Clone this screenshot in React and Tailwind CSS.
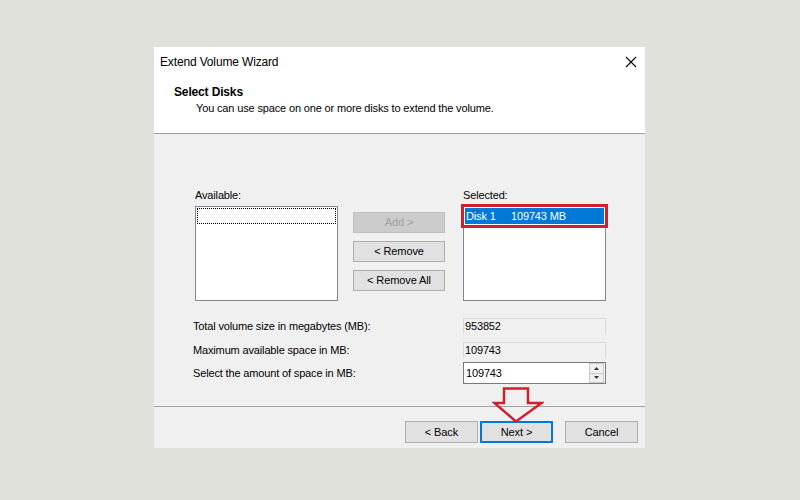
import React from 'react';

const font = { fontFamily: '"Liberation Sans", Arial, sans-serif' };

function Btn({ children, disabled, primary, className = '' }) {
  return (
    <div
      className={`flex items-center justify-center text-[11px] tracking-[-0.1px] border ${
        disabled
          ? 'bg-[#cccccc] border-[#bfbfbf] text-[#a0a0a0]'
          : primary
          ? 'bg-[#e1e1e1] border-[#0078d7] border-2 text-black'
          : 'bg-[#e1e1e1] border-[#adadad] text-black'
      } ${className}`}
    >
      {children}
    </div>
  );
}

function Field({ value }) {
  return (
    <div className="w-[143px] h-[16px] bg-[#f0f0f0] border border-[#d9d9d9] border-b-0 text-[11px] leading-[15px] pl-[1px] text-black">
      {value}
    </div>
  );
}

export default function App() {
  return (
    <div className="w-[800px] h-[500px] bg-[#dfe1da] pt-[47px] pl-[154px] relative tracking-[-0.15px]" style={font}>
      <div className="w-[491px] h-[401px] bg-[#f0f0f0] flex flex-col">
        {/* header */}
        <div className="h-[87px] bg-white flex flex-col border-b border-[#a0a0a0]">
          <div className="flex items-center justify-between pl-[6px] pr-[6px] pt-[8px] h-[22px]">
            <span className="text-[12px] text-black">Extend Volume Wizard</span>
            <svg width="12" height="12" viewBox="0 0 12 12" className="mr-[2px]">
              <path d="M1 1L11 11M11 1L1 11" stroke="#000" strokeWidth="1.1" />
            </svg>
          </div>
          <div className="pl-[20px] pt-[16px] text-[12px] font-bold text-black leading-[15px]">Select Disks</div>
          <div className="pl-[42px] pt-[1px] text-[11px] text-black leading-[15px]">
            You can use space on one or more disks to extend the volume.
          </div>
        </div>

        {/* body */}
        <div className="flex-1 flex flex-col pl-[39px]">
          <div className="flex mt-[54px]">
            <div className="flex flex-col w-[143px] ml-[2px]">
              <span className="text-[11px] leading-[14px] text-black">Available:</span>
              <div className="mt-[4px] h-[95px] bg-white border border-[#828790] p-[1px]">
                <div className="h-[16px] border border-dotted border-black" />
              </div>
            </div>
            <div className="flex flex-col gap-[8px] ml-[15px] mt-[24px] w-[92px]">
              <Btn disabled className="h-[21px]">Add &gt;</Btn>
              <Btn className="h-[21px]">&lt; Remove</Btn>
              <Btn className="h-[21px]">&lt; Remove All</Btn>
            </div>
            <div className="flex flex-col w-[143px] ml-[18px]">
              <span className="text-[11px] leading-[14px] text-black">Selected:</span>
              <div className="mt-[4px] h-[95px] bg-white border border-[#828790] p-[1px]">
                <div className="h-[16px] bg-[#0078d7] text-white text-[11px] leading-[16px] pl-[1px] outline-[3px] outline-[#d0202e] outline-offset-[1px] flex">
                  <span className="w-[45px]">Disk 1</span>
                  <span>109743 MB</span>
                </div>
              </div>
            </div>
          </div>

          <div className="flex flex-col mt-[17px] w-[413px]">
            <div className="flex items-center justify-between h-[16px]">
              <span className="text-[11px] text-black">Total volume size in megabytes (MB):</span>
              <Field value="953852" />
            </div>
            <div className="flex items-center justify-between h-[16px] mt-[8px]">
              <span className="text-[11px] text-black">Maximum available space in MB:</span>
              <Field value="109743" />
            </div>
            <div className="flex items-center justify-between h-[22px] mt-[4px]">
              <span className="text-[11px] text-black">Select the amount of space in MB:</span>
              <div className="w-[143px] h-[22px] bg-white border border-[#7a7a7a] flex items-center">
                <span className="flex-1 text-[11px] pl-[2px] text-black">109743</span>
                <div className="w-[15px] h-[20px] flex flex-col mr-[1px]">
                  <div className="flex-1 bg-[#f0f0f0] border border-[#c8c8c8] flex items-center justify-center">
                    <svg width="5" height="3" viewBox="0 0 5 3"><path d="M0 3L2.5 0L5 3Z" fill="#333" /></svg>
                  </div>
                  <div className="flex-1 bg-[#f0f0f0] border border-t-0 border-[#c8c8c8] flex items-center justify-center">
                    <svg width="5" height="3" viewBox="0 0 5 3"><path d="M0 0L2.5 3L5 0Z" fill="#333" /></svg>
                  </div>
                </div>
              </div>
            </div>
          </div>
        </div>

        {/* footer */}
        <div className="h-[42px] border-t border-[#a0a0a0] flex items-start pt-[14px] pl-[251px]">
          <Btn className="w-[73px] h-[22px]">&lt; Back</Btn>
          <Btn primary className="w-[73px] h-[22px] ml-[2px]">Next &gt;</Btn>
          <Btn className="w-[73px] h-[22px] ml-[12px]">Cancel</Btn>
        </div>
      </div>

      {/* red arrow annotation */}
      <svg className="absolute left-[492px] top-[387px]" width="52" height="37" viewBox="0 0 52 37">
        <path
          d="M12 1.5H36V16H49.5L24 34.5L2.5 16H12Z"
          fill="none"
          stroke="#d0202e"
          strokeWidth="2.5"
          strokeLinejoin="miter"
        />
      </svg>
    </div>
  );
}
